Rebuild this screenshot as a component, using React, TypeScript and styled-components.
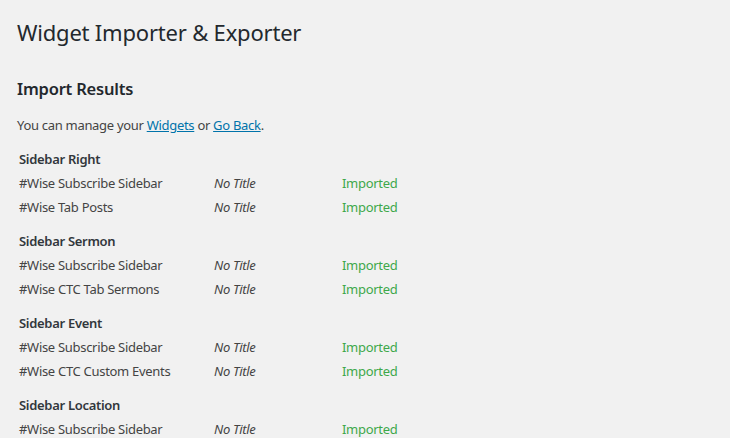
import { Fragment } from 'react';
import styled, { createGlobalStyle } from 'styled-components';

const GlobalStyle = createGlobalStyle`
  html, body {
    margin: 0;
    padding: 0;
    background: #f1f1f1;
  }
  body {
    font-family: 'Noto Sans', 'Open Sans', sans-serif;
    font-size: 13px;
    color: #444;
  }
`;

const Wrap = styled.div`
  padding: 14px 18px 0 17px;
`;

const PageTitle = styled.h1`
  margin: 0;
  font-size: 22px;
  font-weight: 400;
  letter-spacing: -0.2px;
  line-height: 36px;
  color: #23282d;
`;

const SectionTitle = styled.h2`
  margin: 27px 0 0;
  font-size: 16.5px;
  font-weight: 600;
  letter-spacing: -0.2px;
  line-height: 24px;
  color: #23282d;
`;

const Intro = styled.p`
  margin: 12px 0 0;
  line-height: 24px;
  letter-spacing: -0.3px;
`;

const Link = styled.a`
  color: #0073aa;
  text-decoration: underline;
`;

const Results = styled.div`
  margin-top: 10px;
  padding-left: 2px;
`;

const Group = styled.div`
  display: grid;
  grid-template-columns: 195px 128px auto;
  grid-auto-rows: 24px;
  align-items: center;
  letter-spacing: -0.3px;
  & + & {
    margin-top: 10px;
  }
`;

const GroupName = styled.div`
  grid-column: 1 / -1;
  font-weight: 600;
  color: #32373c;
`;

const Cell = styled.div<{ $kind?: 'title' | 'status' }>`
  white-space: nowrap;
  font-style: ${({ $kind }) => ($kind === 'title' ? 'italic' : 'normal')};
  color: ${({ $kind }) => ($kind === 'status' ? '#3ea84a' : '#444')};
`;

const groups = [
  { name: 'Sidebar Right', widgets: ['#Wise Subscribe Sidebar', '#Wise Tab Posts'] },
  { name: 'Sidebar Sermon', widgets: ['#Wise Subscribe Sidebar', '#Wise CTC Tab Sermons'] },
  { name: 'Sidebar Event', widgets: ['#Wise Subscribe Sidebar', '#Wise CTC Custom Events'] },
  { name: 'Sidebar Location', widgets: ['#Wise Subscribe Sidebar'] },
];

export default function App() {
  return (
    <>
      <GlobalStyle />
      <Wrap>
        <PageTitle>Widget Importer &amp; Exporter</PageTitle>
        <SectionTitle>Import Results</SectionTitle>
        <Intro>
          You can manage your <Link href="#">Widgets</Link> or <Link href="#">Go Back</Link>.
        </Intro>
        <Results>
          {groups.map((g) => (
            <Group key={g.name}>
              <GroupName>{g.name}</GroupName>
              {g.widgets.map((w) => (
                <Fragment key={w}>
                  <Cell>{w}</Cell>
                  <Cell $kind="title">No Title</Cell>
                  <Cell $kind="status">Imported</Cell>
                </Fragment>
              ))}
            </Group>
          ))}
        </Results>
      </Wrap>
    </>
  );
}
